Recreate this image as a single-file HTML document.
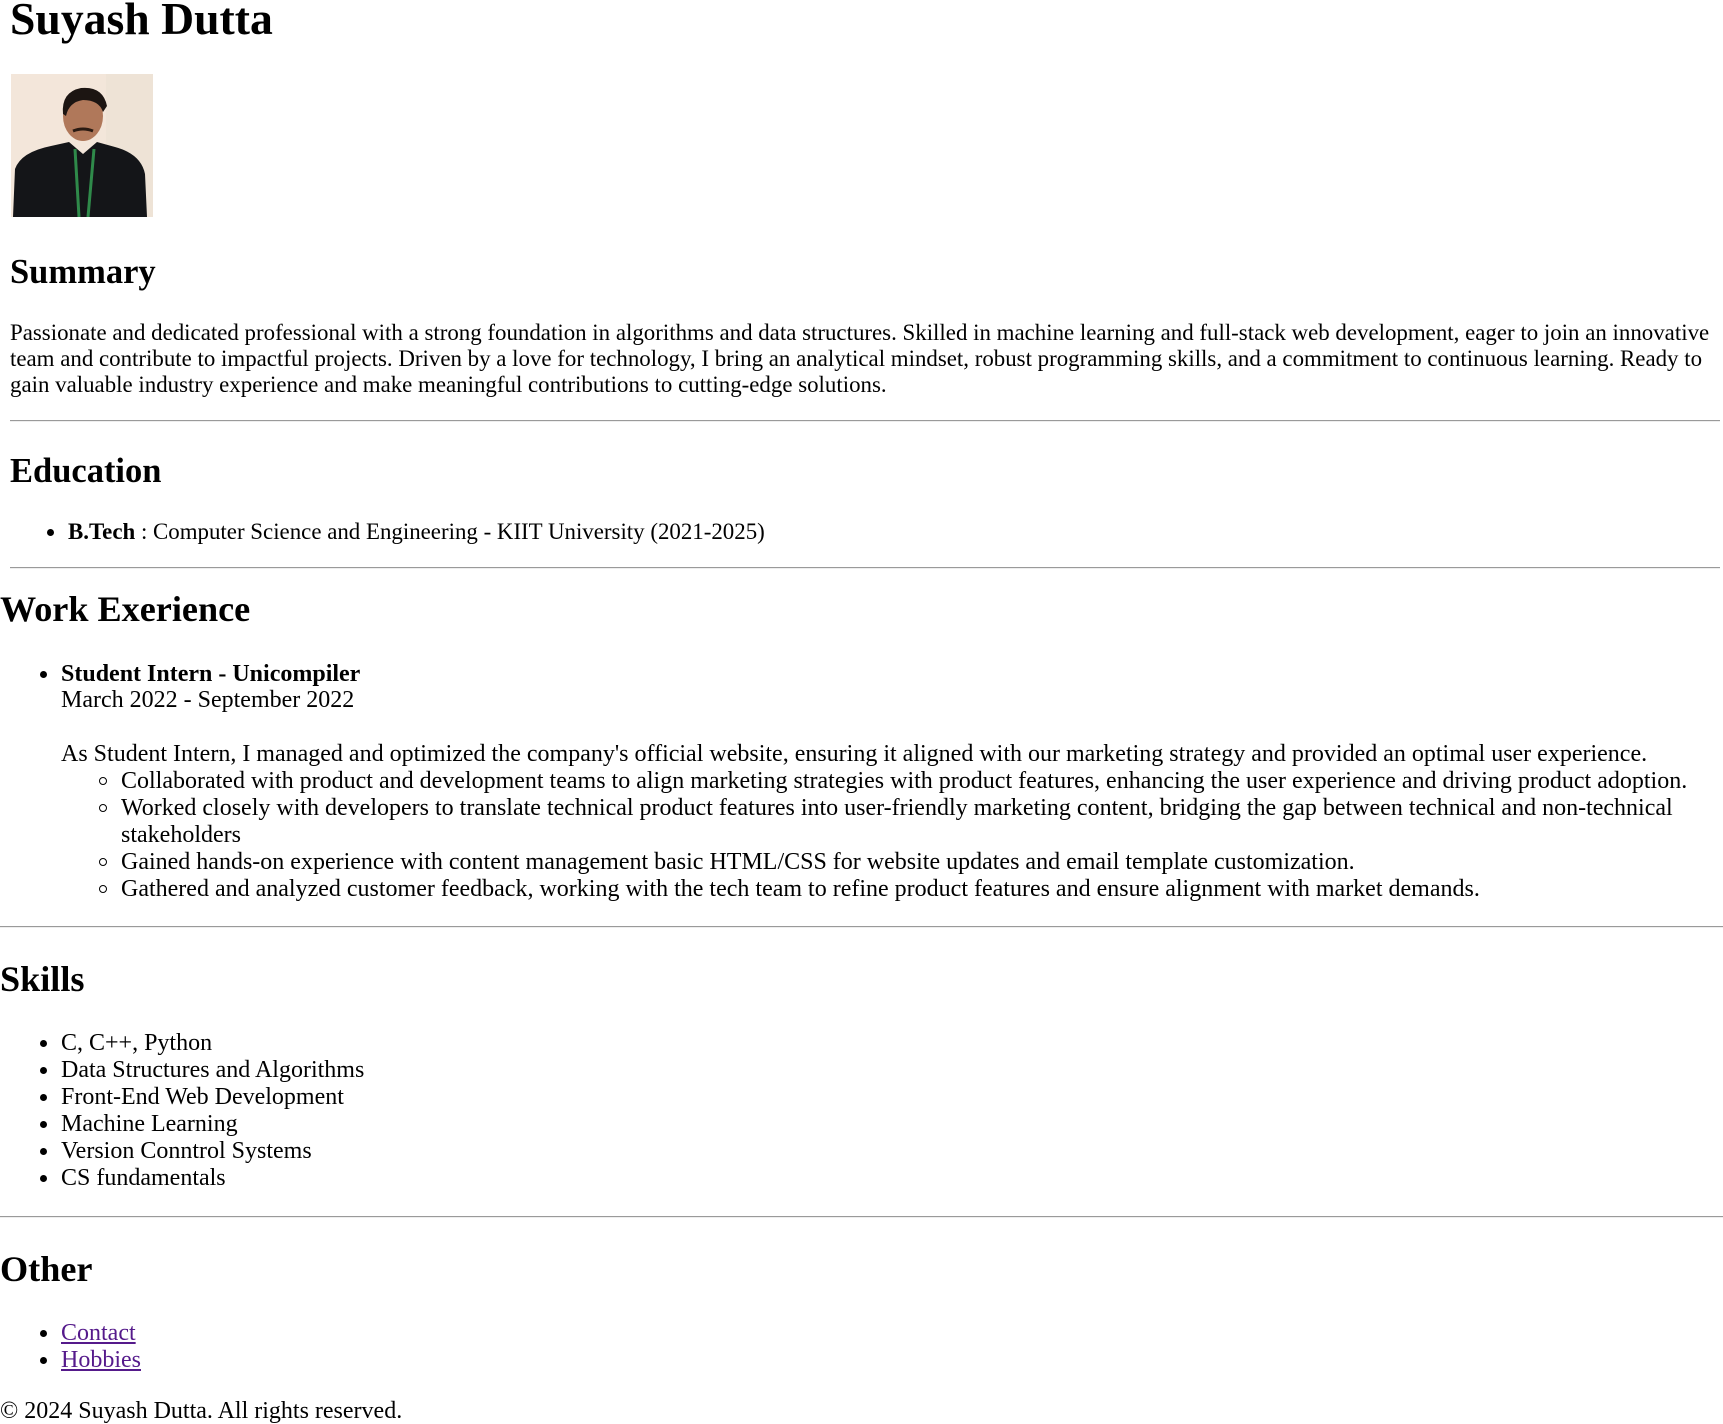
<!DOCTYPE html>
<html><head><meta charset="utf-8"><style>
html,body{margin:0;padding:0;background:#fff;width:1723px;height:1424px;overflow:hidden;position:relative}
body{font-family:"Liberation Serif",serif;color:#000;font-size:24px}
.l{position:absolute;white-space:nowrap;line-height:28px;height:28px}
.s{font-size:22.9px}
.h1{position:absolute;white-space:nowrap;font-weight:bold;font-size:45.7px;line-height:50px}
.h2{position:absolute;white-space:nowrap;font-weight:bold;font-size:36.2px;line-height:40px}
.h2s{font-size:34.5px}
.hr{position:absolute;height:0;border-top:1px solid #9a9a9a;border-bottom:1px solid #eee}
.b{position:absolute;width:7px;height:7px;border-radius:50%;background:#000}
.c{position:absolute;width:6px;height:6px;border-radius:50%;border:1.3px solid #000}
a{color:#551a8b;text-decoration:underline}
</style></head><body>
<div class="h1" style="left:10px;top:-6px">Suyash Dutta</div>
<svg style="position:absolute;left:11px;top:74px" width="142" height="143" viewBox="0 0 142 143">
<rect width="142" height="143" fill="#f3e6da"/>
<rect x="95" y="0" width="47" height="143" fill="#eee3d6"/>
<path d="M2 143 L4 95 Q10 78 40 72 L58 68 L72 80 L86 68 L104 73 Q130 80 134 100 L136 143Z" fill="#141518"/>
<ellipse cx="72" cy="42" rx="20" ry="25" fill="#b0785a"/>
<path d="M52 40 Q50 18 70 14 Q92 12 96 32 L92 38 Q88 26 72 26 Q58 28 55 42Z" fill="#1c1512"/>
<path d="M62 57 Q72 53 82 57" stroke="#2a1a12" stroke-width="3" fill="none"/>
<path d="M64 75 L68 143 M83 75 L77 143" stroke="#2f8a4a" stroke-width="3"/>
</svg>
<div class="h2 h2s" style="left:10px;top:252px">Summary</div>
<div class="l s" style="left:10px;top:319px">Passionate and dedicated professional with a strong foundation in algorithms and data structures. Skilled in machine learning and full-stack web development, eager to join an innovative</div>
<div class="l s" style="left:10px;top:345px">team and contribute to impactful projects. Driven by a love for technology, I bring an analytical mindset, robust programming skills, and a commitment to continuous learning. Ready to</div>
<div class="l s" style="left:10px;top:371px">gain valuable industry experience and make meaningful contributions to cutting-edge solutions.</div>
<div class="hr" style="left:10px;width:1710px;top:420px"></div>
<div class="h2 h2s" style="left:10px;top:451px">Education</div>
<div class="b" style="left:47px;top:529px"></div>
<div class="l s" style="left:68px;top:518px"><b>B.Tech</b> : Computer Science and Engineering - KIIT University (2021-2025)</div>
<div class="hr" style="left:10px;width:1710px;top:567px"></div>
<div class="h2" style="left:0px;top:589px">Work Exerience</div>
<div class="b" style="left:40px;top:671px"></div>
<div class="l" style="left:61px;top:660px"><b>Student Intern - Unicompiler</b></div>
<div class="l" style="left:61px;top:686px">March 2022 - September 2022</div>
<div class="l" style="left:61px;top:740px">As Student Intern, I managed and optimized the company's official website, ensuring it aligned with our marketing strategy and provided an optimal user experience.</div>
<div class="c" style="left:99px;top:777px"></div>
<div class="l" style="left:121px;top:767px">Collaborated with product and development teams to align marketing strategies with product features, enhancing the user experience and driving product adoption.</div>
<div class="c" style="left:99px;top:804px"></div>
<div class="l" style="left:121px;top:794px">Worked closely with developers to translate technical product features into user-friendly marketing content, bridging the gap between technical and non-technical</div>
<div class="l" style="left:121px;top:821px">stakeholders</div>
<div class="c" style="left:99px;top:858px"></div>
<div class="l" style="left:121px;top:848px">Gained hands-on experience with content management basic HTML/CSS for website updates and email template customization.</div>
<div class="c" style="left:99px;top:885px"></div>
<div class="l" style="left:121px;top:875px">Gathered and analyzed customer feedback, working with the tech team to refine product features and ensure alignment with market demands.</div>
<div class="hr" style="left:0px;width:1723px;top:926px"></div>
<div class="h2" style="left:0px;top:959px">Skills</div>
<div class="b" style="left:40px;top:1040px"></div><div class="l" style="left:61px;top:1029px">C, C++, Python</div>
<div class="b" style="left:40px;top:1067px"></div><div class="l" style="left:61px;top:1056px">Data Structures and Algorithms</div>
<div class="b" style="left:40px;top:1094px"></div><div class="l" style="left:61px;top:1083px">Front-End Web Development</div>
<div class="b" style="left:40px;top:1121px"></div><div class="l" style="left:61px;top:1110px">Machine Learning</div>
<div class="b" style="left:40px;top:1148px"></div><div class="l" style="left:61px;top:1137px">Version Conntrol Systems</div>
<div class="b" style="left:40px;top:1175px"></div><div class="l" style="left:61px;top:1164px">CS fundamentals</div>
<div class="hr" style="left:0px;width:1723px;top:1216px"></div>
<div class="h2" style="left:0px;top:1249px">Other</div>
<div class="b" style="left:40px;top:1330px"></div><div class="l" style="left:61px;top:1319px"><a>Contact</a></div>
<div class="b" style="left:40px;top:1357px"></div><div class="l" style="left:61px;top:1346px"><a>Hobbies</a></div>
<div class="l" style="left:0px;top:1397px">© 2024 Suyash Dutta. All rights reserved.</div>
</body></html>
